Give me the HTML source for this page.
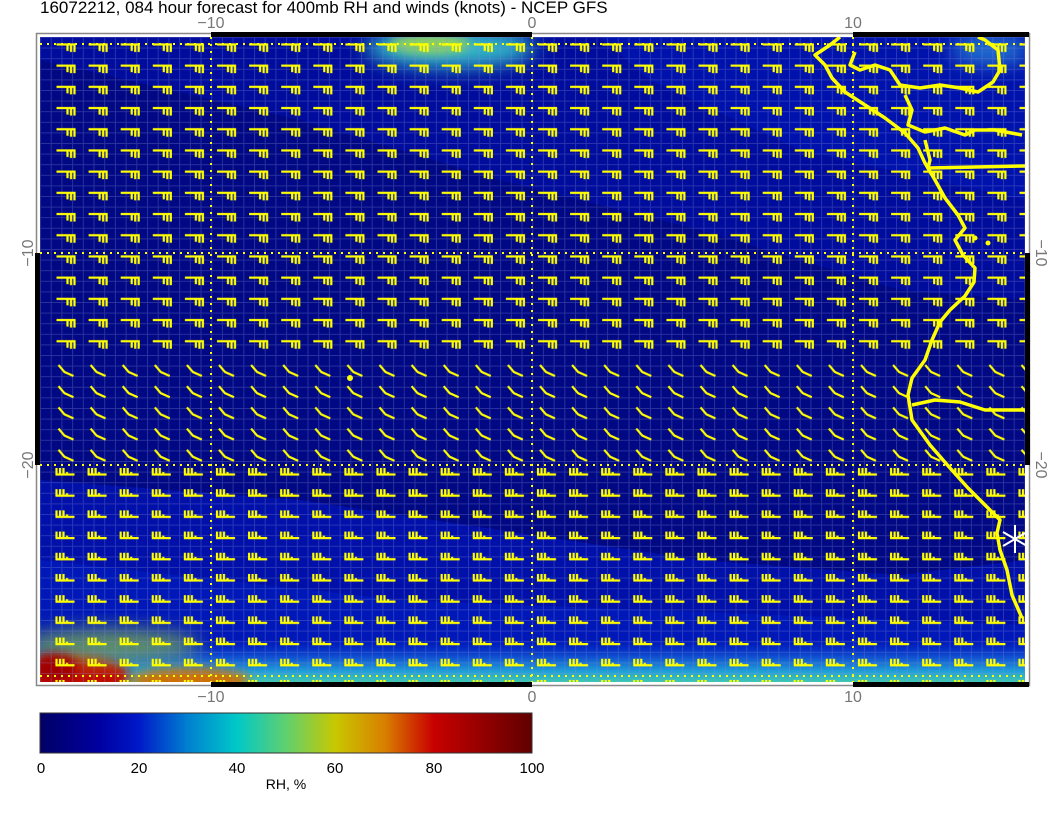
<!DOCTYPE html>
<html><head><meta charset="utf-8"><style>
html,body{margin:0;padding:0;background:#fff;width:1056px;height:816px;overflow:hidden}
svg{display:block}
text{font-family:"Liberation Sans",sans-serif}
</style></head><body>
<svg width="1056" height="816" viewBox="0 0 1056 816" xmlns="http://www.w3.org/2000/svg">
<defs>
<filter id="bl" x="-50%" y="-50%" width="200%" height="200%"><feGaussianBlur stdDeviation="10"/></filter>
<filter id="bl2" x="-50%" y="-50%" width="200%" height="200%"><feGaussianBlur stdDeviation="5"/></filter>
<clipPath id="cp"><rect x="40" y="37" width="985" height="645"/></clipPath>
<pattern id="grid" x="40" y="37" width="10.7" height="10.6" patternUnits="userSpaceOnUse">
<path d="M0.5 0V10.6M0 0.5H10.7" stroke="#8890d8" stroke-width="1" opacity="0.3" fill="none"/>
</pattern>
<pattern id="pn" x="50.5" y="41" width="32.1" height="21.2" patternUnits="userSpaceOnUse">
<g stroke="#ffff00" stroke-width="2.2" fill="none">
<path d="M6 3.5H24V11M20.5 4V11M17 4V10"/>
</g>
</pattern>
<pattern id="pm" x="50.5" y="41" width="32.1" height="21.2" patternUnits="userSpaceOnUse">
<g stroke="#ffff00" stroke-width="2.2" fill="none">
<path d="M8 6L14 13L23 17"/>
</g>
</pattern>
<pattern id="ps" x="50.5" y="41" width="32.1" height="21.2" patternUnits="userSpaceOnUse">
<g stroke="#ffff00" stroke-width="2.2" fill="none">
<path d="M5 9.5H24M6 10V3M9.5 10V3M13 10V3M16.5 10V7"/>
</g>
</pattern>
<linearGradient id="cb" x1="0" x2="1" y1="0" y2="0">
<stop offset="0" stop-color="#000066"/>
<stop offset="0.12" stop-color="#0000a0"/>
<stop offset="0.2" stop-color="#0018c8"/>
<stop offset="0.3" stop-color="#0080d0"/>
<stop offset="0.4" stop-color="#00c8c8"/>
<stop offset="0.5" stop-color="#60d070"/>
<stop offset="0.6" stop-color="#c8c800"/>
<stop offset="0.7" stop-color="#d88000"/>
<stop offset="0.8" stop-color="#c80000"/>
<stop offset="1" stop-color="#600000"/>
</linearGradient>
<linearGradient id="bot" x1="0" x2="0" y1="0" y2="1">
<stop offset="0" stop-color="#0030c8" stop-opacity="0"/>
<stop offset="0.4" stop-color="#1050d0"/>
<stop offset="0.75" stop-color="#20a0d8"/>
<stop offset="1" stop-color="#40c8b0"/>
</linearGradient>
</defs>

<text x="40" y="13" font-size="17" fill="#000">16072212, 084 hour forecast for 400mb RH and winds (knots) - NCEP GFS</text>

<rect x="36.5" y="33.5" width="993" height="652" fill="none" stroke="#888" stroke-width="1.5"/>
<rect x="211" y="32" width="321" height="5" fill="#000"/>
<rect x="853" y="32" width="176" height="5" fill="#000"/>
<rect x="211" y="682" width="321" height="5" fill="#000"/>
<rect x="853" y="682" width="176" height="5" fill="#000"/>
<rect x="35" y="253" width="5" height="212" fill="#000"/>
<rect x="1025" y="253" width="5" height="212" fill="#000"/>

<g clip-path="url(#cp)">
<rect x="40" y="37" width="985" height="645" fill="#000884"/>
<path d="M40 37H1025V300L900 290L700 230L500 180L300 120L40 60Z" fill="#000c9c"/>
<path d="M600 37H1025V200L800 150L650 80Z" fill="#0012ac"/>
<path d="M40 480L300 500L500 530L700 560L900 575L1025 560V682H40Z" fill="#0010a8"/>
<path d="M40 560L400 600L1025 625V682H40Z" fill="#0018b8"/>
<rect x="40" y="640" width="985" height="42" fill="url(#bot)"/>
<ellipse cx="70" cy="676" rx="60" ry="22" fill="#c01000" filter="url(#bl2)"/>
<ellipse cx="190" cy="680" rx="60" ry="12" fill="#d07000" filter="url(#bl2)"/>
<ellipse cx="110" cy="645" rx="90" ry="16" fill="#90c840" opacity="0.7" filter="url(#bl)"/>
<ellipse cx="55" cy="668" rx="22" ry="14" fill="#a00000" filter="url(#bl2)"/>
<ellipse cx="450" cy="48" rx="85" ry="20" fill="#30b8c8" filter="url(#bl)"/>
<ellipse cx="430" cy="44" rx="40" ry="10" fill="#90d060" filter="url(#bl2)"/>
<ellipse cx="990" cy="50" rx="40" ry="16" fill="#2070d0" filter="url(#bl)"/>
<rect x="40" y="37" width="985" height="645" fill="url(#grid)"/>

<g stroke="#ffff00" stroke-width="2" stroke-dasharray="2,5" fill="none">
<path d="M40 44H1025M40 253H1025M40 465H1025M40 676H1025M211 37V682M532 37V682M853 37V682"/>
</g>

<rect x="50" y="37" width="975" height="322" fill="url(#pn)"/>
<rect x="50" y="359" width="975" height="105" fill="url(#pm)"/>
<rect x="50" y="464" width="975" height="218" fill="url(#ps)"/>

<g stroke="#ffff00" stroke-width="3.5" fill="none" stroke-linejoin="round">
<path d="M840 37L830 45L815 55L825 65L832 78L845 92L865 105L885 118L905 133L918 148L925 163L935 180L945 198L958 215L965 228L955 240L963 255L975 268L974 282L965 296L950 310L940 322L932 340L925 360L912 378L908 395L912 420L930 445L950 468L968 488L985 505L1000 520L997 533L1000 550L1007 570L1012 595L1022 618"/>
<path d="M855 52L850 65L860 70L875 65L890 70L900 85L920 88L940 85L960 88L978 92L993 82L1000 70L998 50L985 40L978 37"/>
<path d="M905 95L912 110L908 125L925 132L945 128L965 135L975 130L995 130L1022 135"/>
<path d="M925 140L930 160L928 168L1025 166"/>
<path d="M912 405L935 400L960 402L985 410L1025 410"/>
</g>
<g fill="#ffff00"><circle cx="350" cy="378" r="3"/><circle cx="975" cy="238" r="2.5"/><circle cx="988" cy="243" r="2.5"/></g>
<g stroke="#ffffff" stroke-width="2"><path d="M1015 525V553M1003 532L1027 546M1003 546L1027 532"/></g>
</g>

<g font-size="16" fill="#777" text-anchor="middle">
<text x="211" y="28">−10</text>
<text x="532" y="28">0</text>
<text x="853" y="28">10</text>
<text x="211" y="702">−10</text>
<text x="532" y="702">0</text>
<text x="853" y="702">10</text>
<text transform="translate(33,253) rotate(-90)">−10</text>
<text transform="translate(33,465) rotate(-90)">−20</text>
<text transform="translate(1036,253) rotate(90)">−10</text>
<text transform="translate(1036,465) rotate(90)">−20</text>
</g>

<rect x="40" y="713" width="492" height="40" fill="url(#cb)" stroke="#333" stroke-width="1"/>
<g font-size="15" fill="#000" text-anchor="middle">
<text x="41" y="773">0</text>
<text x="139" y="773">20</text>
<text x="237" y="773">40</text>
<text x="335" y="773">60</text>
<text x="434" y="773">80</text>
<text x="532" y="773">100</text>
<text x="286" y="789" font-size="14">RH, %</text>
</g>
</svg>
</body></html>
